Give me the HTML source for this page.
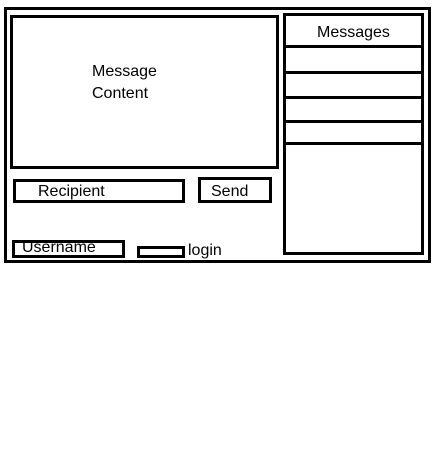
<!DOCTYPE html>
<html><head><style>
body{margin:0;width:441px;height:450px;background:#fff;position:relative;font-family:"Liberation Sans",sans-serif;font-size:16px;color:#000}
.b{position:absolute;border:3px solid #000;box-sizing:border-box}
.l{position:absolute;left:283px;width:140px;height:3px;background:#000}
.t{position:absolute;line-height:1;white-space:nowrap}
</style></head><body>
<div class="b" style="left:4px;top:7px;width:427px;height:256px"></div>
<div class="b" style="left:10px;top:15px;width:269px;height:154px"></div>
<div class="b" style="left:283px;top:13px;width:141px;height:242px"></div>
<div class="l" style="top:45px"></div>
<div class="l" style="top:71px"></div>
<div class="l" style="top:96px"></div>
<div class="l" style="top:120px"></div>
<div class="l" style="top:142px"></div>
<div class="b" style="left:13px;top:179px;width:172px;height:24px"></div>
<div class="b" style="left:198px;top:177px;width:74px;height:26px"></div>
<div class="b" style="left:12px;top:240px;width:113px;height:18px"></div>
<div class="b" style="left:137px;top:246px;width:48px;height:12px"></div>
<div class="t" style="left:317px;top:25px">Messages</div>
<div class="t" style="left:92px;top:64px">Message</div>
<div class="t" style="left:92px;top:86px">Content</div>
<div class="t" style="left:38px;top:184px">Recipient</div>
<div class="t" style="left:211px;top:184px">Send</div>
<div class="t" style="left:22px;top:240px">Username</div>
<div class="t" style="left:188px;top:243px">login</div>
</body></html>
